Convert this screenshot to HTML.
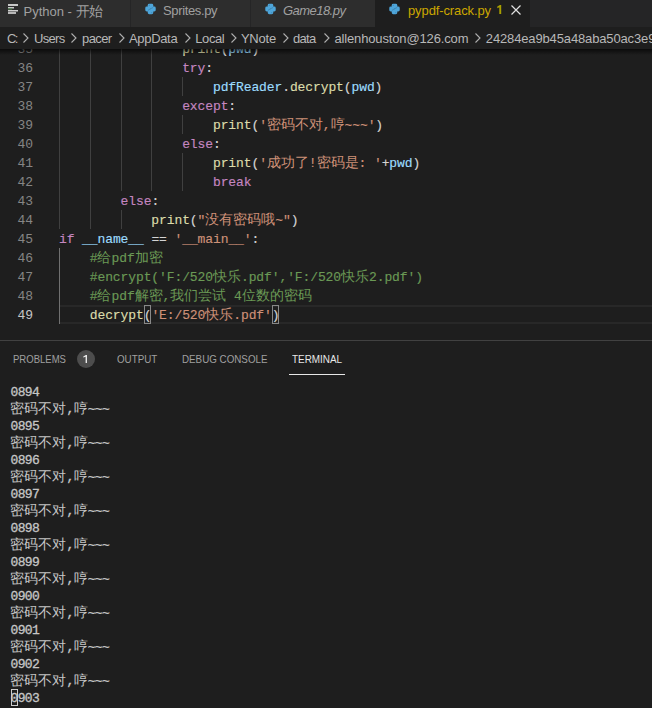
<!DOCTYPE html>
<html><head><meta charset="utf-8"><style>
html,body{margin:0;padding:0;}
body{width:652px;height:708px;overflow:hidden;background:#1e1e1e;position:relative;font-family:"Liberation Sans",sans-serif;}
.abs{position:absolute;}
#tabs{position:absolute;left:0;top:0;width:652px;height:27px;background:#252526;}
.tab{position:absolute;top:0;height:27px;background:#2d2d2d;}
.tab .lbl{position:absolute;top:3px;font-size:13px;line-height:16px;color:#a0a0a0;white-space:nowrap;}
.tab svg{position:absolute;top:3px;}
#crumbs{position:absolute;left:0;top:27px;width:652px;height:22px;background:#1e1e1e;}
.cr{position:absolute;top:4px;font-size:13px;line-height:16px;color:#b8b8b8;white-space:nowrap;}
.chev{position:absolute;top:5px;}
#editor{position:absolute;left:0;top:49px;width:652px;height:291px;overflow:hidden;background:#1e1e1e;}
#shadow{position:absolute;left:0;top:49px;width:652px;height:6px;background:linear-gradient(#000000a0,#00000000);}
.ln{position:absolute;left:0;width:33px;text-align:right;height:19px;font-family:"Liberation Mono",monospace;font-size:13px;line-height:19px;letter-spacing:-0.104px;}
.cl{position:absolute;height:19px;white-space:pre;-webkit-text-stroke:0.15px currentColor;font-family:"Liberation Mono",monospace;font-size:13px;line-height:19px;letter-spacing:-0.104px;}
.cl .cj{font-size:14px;letter-spacing:0;-webkit-text-stroke:0;}
.g{position:absolute;width:1px;height:19px;}
.cur{position:absolute;left:60px;width:592px;height:15px;border-top:2px solid #282828;border-bottom:2px solid #282828;}
.bm{position:absolute;width:5px;height:17px;border:1px solid #888;}
#panel{position:absolute;left:0;top:340px;width:652px;height:368px;background:#1e1e1e;border-top:1px solid #414141;}
.pt{position:absolute;top:11px;transform-origin:0 0;font-size:11px;line-height:14px;color:#a0a0a0;white-space:nowrap;}
.badge{position:absolute;left:77px;top:9px;width:18px;height:18px;border-radius:9px;background:#4d4d4d;color:#fff;font-size:11px;line-height:18px;text-align:center;}
.tl{position:absolute;left:10.5px;height:17px;white-space:pre;font-family:"Liberation Mono",monospace;font-size:13px;line-height:17px;letter-spacing:-0.651px;-webkit-text-stroke:0.3px currentColor;}
.tl .cj{font-size:14px;letter-spacing:0.1px;-webkit-text-stroke:0;}
.tc{position:absolute;left:11px;width:5px;height:15px;border:1px solid #cccccc;}
</style></head><body>
<div id="tabs">
 <div class="tab" style="left:0;width:130px"><svg style="left:8px;top:4px" width="12" height="12" viewBox="0 0 12 12"><rect x="0" y="0" width="10" height="2" fill="#c8c8c8"/><rect x="0" y="3" width="6" height="1.5" fill="#c8c8c8"/><rect x="0" y="4.3" width="4" height="1.2" fill="#5b8a5b"/><rect x="0" y="6" width="10" height="1.5" fill="#d0d0d0"/><rect x="0" y="8" width="8" height="2" fill="#b8b8b8"/></svg><span class="lbl" style="left:23.5px">Python - <span style="font-size:14px;position:relative;top:-0.5px;letter-spacing:-0.4px">开始</span></span></div>
 <div class="tab" style="left:131px;width:119px"><svg style="left:14px;top:3px" width="11" height="12" viewBox="0 0 12 12"><g fill="#4ea5d9"><rect x="3" y="0.3" width="6" height="5.4" rx="1.6"/><rect x="0.3" y="3.3" width="5.7" height="5.4" rx="1.6"/><rect x="3" y="6.3" width="6" height="5.4" rx="1.6"/><rect x="6" y="3.3" width="5.7" height="5.4" rx="1.6"/></g><path d="M3.2 7.6 L5.6 5.9 L8.8 4.4" stroke="#2f6f99" stroke-width="0.6" fill="none"/><circle cx="4.6" cy="1.8" r="0.5" fill="#2d5f80"/><circle cx="7.4" cy="10.2" r="0.5" fill="#2d5f80"/></svg><span class="lbl" style="left:32px;letter-spacing:-0.36px">Sprites.py</span></div>
 <div class="tab" style="left:251px;width:124px"><svg style="left:14px;top:3px" width="11" height="12" viewBox="0 0 12 12"><g fill="#4ea5d9"><rect x="3" y="0.3" width="6" height="5.4" rx="1.6"/><rect x="0.3" y="3.3" width="5.7" height="5.4" rx="1.6"/><rect x="3" y="6.3" width="6" height="5.4" rx="1.6"/><rect x="6" y="3.3" width="5.7" height="5.4" rx="1.6"/></g><path d="M3.2 7.6 L5.6 5.9 L8.8 4.4" stroke="#2f6f99" stroke-width="0.6" fill="none"/><circle cx="4.6" cy="1.8" r="0.5" fill="#2d5f80"/><circle cx="7.4" cy="10.2" r="0.5" fill="#2d5f80"/></svg><span class="lbl" style="left:32px;font-style:italic;letter-spacing:-0.54px">Game18.py</span></div>
 <div class="tab" style="left:375px;width:155px;background:#1e1e1e"><svg style="left:14px;top:3px" width="11" height="12" viewBox="0 0 12 12"><g fill="#4ea5d9"><rect x="3" y="0.3" width="6" height="5.4" rx="1.6"/><rect x="0.3" y="3.3" width="5.7" height="5.4" rx="1.6"/><rect x="3" y="6.3" width="6" height="5.4" rx="1.6"/><rect x="6" y="3.3" width="5.7" height="5.4" rx="1.6"/></g><path d="M3.2 7.6 L5.6 5.9 L8.8 4.4" stroke="#2f6f99" stroke-width="0.6" fill="none"/><circle cx="4.6" cy="1.8" r="0.5" fill="#2d5f80"/><circle cx="7.4" cy="10.2" r="0.5" fill="#2d5f80"/></svg><span class="lbl" style="left:33px;color:#cca700;letter-spacing:-0.11px">pypdf-crack.py</span><svg style="left:121px;top:4px" width="7" height="11" viewBox="0 0 7 11"><path d="M1.3 2.4 L3.9 1 L5.2 1 L5.2 10 L3.3 10 L3.3 3.3 L1.3 4.3 Z" fill="#a89f00"/></svg>
 <svg style="left:136px;top:5px" width="10" height="10" viewBox="0 0 10 10"><path d="M0.5 0.5 L9.5 9.5 M9.5 0.5 L0.5 9.5" stroke="#e0e0e0" stroke-width="1.2"/></svg></div>
</div>
<div id="crumbs">
<span class="cr" style="left:7.0px;letter-spacing:-1.6px">C:</span>
<span class="cr" style="left:34.0px;letter-spacing:-0.7px">Users</span>
<span class="cr" style="left:82.0px;letter-spacing:-0.6px">pacer</span>
<span class="cr" style="left:129.0px;letter-spacing:-0.33px">AppData</span>
<span class="cr" style="left:195.3px;letter-spacing:-0.42px">Local</span>
<span class="cr" style="left:240.9px;letter-spacing:-0.22px">YNote</span>
<span class="cr" style="left:292.9px;letter-spacing:-0.63px">data</span>
<span class="cr" style="left:334.4px;letter-spacing:-0.14px">allenhouston@126.com</span>
<span class="cr" style="left:485.8px;letter-spacing:-0.14px">24284ea9b45a48aba50ac3e9fe2a4e7f</span>
<svg class="chev" style="left:22.0px" width="8" height="12" viewBox="0 0 8 12"><path d="M1.5 1.5 L6 6 L1.5 10.5" stroke="#b0b0b0" stroke-width="1.1" fill="none"/></svg>
<svg class="chev" style="left:70.3px" width="8" height="12" viewBox="0 0 8 12"><path d="M1.5 1.5 L6 6 L1.5 10.5" stroke="#b0b0b0" stroke-width="1.1" fill="none"/></svg>
<svg class="chev" style="left:118.3px" width="8" height="12" viewBox="0 0 8 12"><path d="M1.5 1.5 L6 6 L1.5 10.5" stroke="#b0b0b0" stroke-width="1.1" fill="none"/></svg>
<svg class="chev" style="left:184.0px" width="8" height="12" viewBox="0 0 8 12"><path d="M1.5 1.5 L6 6 L1.5 10.5" stroke="#b0b0b0" stroke-width="1.1" fill="none"/></svg>
<svg class="chev" style="left:230.0px" width="8" height="12" viewBox="0 0 8 12"><path d="M1.5 1.5 L6 6 L1.5 10.5" stroke="#b0b0b0" stroke-width="1.1" fill="none"/></svg>
<svg class="chev" style="left:281.6px" width="8" height="12" viewBox="0 0 8 12"><path d="M1.5 1.5 L6 6 L1.5 10.5" stroke="#b0b0b0" stroke-width="1.1" fill="none"/></svg>
<svg class="chev" style="left:323.3px" width="8" height="12" viewBox="0 0 8 12"><path d="M1.5 1.5 L6 6 L1.5 10.5" stroke="#b0b0b0" stroke-width="1.1" fill="none"/></svg>
<svg class="chev" style="left:474.0px" width="8" height="12" viewBox="0 0 8 12"><path d="M1.5 1.5 L6 6 L1.5 10.5" stroke="#b0b0b0" stroke-width="1.1" fill="none"/></svg>
</div>
<div id="editor">
<div class="ln" style="top:-9px;color:#858585">35</div>
<div class="ln" style="top:10px;color:#858585">36</div>
<div class="ln" style="top:29px;color:#858585">37</div>
<div class="ln" style="top:48px;color:#858585">38</div>
<div class="ln" style="top:67px;color:#858585">39</div>
<div class="ln" style="top:86px;color:#858585">40</div>
<div class="ln" style="top:105px;color:#858585">41</div>
<div class="ln" style="top:124px;color:#858585">42</div>
<div class="ln" style="top:143px;color:#858585">43</div>
<div class="ln" style="top:162px;color:#858585">44</div>
<div class="ln" style="top:181px;color:#858585">45</div>
<div class="ln" style="top:200px;color:#858585">46</div>
<div class="ln" style="top:219px;color:#858585">47</div>
<div class="ln" style="top:238px;color:#858585">48</div>
<div class="ln" style="top:257px;color:#c6c6c6">49</div>
<div class="cur" style="top:256px"></div>
<div class="g" style="left:59px;top:-10px;background:#404040"></div>
<div class="g" style="left:90px;top:-10px;background:#404040"></div>
<div class="g" style="left:121px;top:-10px;background:#404040"></div>
<div class="g" style="left:151px;top:-10px;background:#404040"></div>
<div class="g" style="left:59px;top:9px;background:#404040"></div>
<div class="g" style="left:90px;top:9px;background:#404040"></div>
<div class="g" style="left:121px;top:9px;background:#404040"></div>
<div class="g" style="left:151px;top:9px;background:#404040"></div>
<div class="g" style="left:59px;top:28px;background:#404040"></div>
<div class="g" style="left:90px;top:28px;background:#404040"></div>
<div class="g" style="left:121px;top:28px;background:#404040"></div>
<div class="g" style="left:151px;top:28px;background:#404040"></div>
<div class="g" style="left:182px;top:28px;background:#404040"></div>
<div class="g" style="left:59px;top:47px;background:#404040"></div>
<div class="g" style="left:90px;top:47px;background:#404040"></div>
<div class="g" style="left:121px;top:47px;background:#404040"></div>
<div class="g" style="left:151px;top:47px;background:#404040"></div>
<div class="g" style="left:59px;top:66px;background:#404040"></div>
<div class="g" style="left:90px;top:66px;background:#404040"></div>
<div class="g" style="left:121px;top:66px;background:#404040"></div>
<div class="g" style="left:151px;top:66px;background:#404040"></div>
<div class="g" style="left:182px;top:66px;background:#404040"></div>
<div class="g" style="left:59px;top:85px;background:#404040"></div>
<div class="g" style="left:90px;top:85px;background:#404040"></div>
<div class="g" style="left:121px;top:85px;background:#404040"></div>
<div class="g" style="left:151px;top:85px;background:#404040"></div>
<div class="g" style="left:59px;top:104px;background:#404040"></div>
<div class="g" style="left:90px;top:104px;background:#404040"></div>
<div class="g" style="left:121px;top:104px;background:#404040"></div>
<div class="g" style="left:151px;top:104px;background:#404040"></div>
<div class="g" style="left:182px;top:104px;background:#404040"></div>
<div class="g" style="left:59px;top:123px;background:#404040"></div>
<div class="g" style="left:90px;top:123px;background:#404040"></div>
<div class="g" style="left:121px;top:123px;background:#404040"></div>
<div class="g" style="left:151px;top:123px;background:#404040"></div>
<div class="g" style="left:182px;top:123px;background:#404040"></div>
<div class="g" style="left:59px;top:142px;background:#404040"></div>
<div class="g" style="left:90px;top:142px;background:#404040"></div>
<div class="g" style="left:59px;top:161px;background:#404040"></div>
<div class="g" style="left:90px;top:161px;background:#404040"></div>
<div class="g" style="left:121px;top:161px;background:#404040"></div>
<div class="g" style="left:59px;top:199px;background:#707070"></div>
<div class="g" style="left:59px;top:218px;background:#707070"></div>
<div class="g" style="left:59px;top:237px;background:#707070"></div>
<div class="g" style="left:59px;top:256px;background:#707070"></div>
<div class="bm" style="left:144px;top:256px"></div>
<div class="bm" style="left:272px;top:256px"></div>
<div class="cl" style="top:-9px;left:182.16px"><span style="color:#dcdcaa">print</span><span style="color:#d4d4d4">(</span><span style="color:#9cdcfe">pwd</span><span style="color:#d4d4d4">)</span></div>
<div class="cl" style="top:10px;left:182.16px"><span style="color:#c586c0">try</span><span style="color:#d4d4d4">:</span></div>
<div class="cl" style="top:29px;left:212.95px"><span style="color:#9cdcfe">pdfReader</span><span style="color:#d4d4d4">.</span><span style="color:#dcdcaa">decrypt</span><span style="color:#d4d4d4">(</span><span style="color:#9cdcfe">pwd</span><span style="color:#d4d4d4">)</span></div>
<div class="cl" style="top:48px;left:182.16px"><span style="color:#c586c0">except</span><span style="color:#d4d4d4">:</span></div>
<div class="cl" style="top:67px;left:212.95px"><span style="color:#dcdcaa">print</span><span style="color:#d4d4d4">(</span><span style="color:#ce9178">&#x27;</span><span class="cj" style="color:#ce9178">密码不对</span><span style="color:#ce9178">,</span><span class="cj" style="color:#ce9178">哼</span><span style="color:#ce9178">~~~&#x27;</span><span style="color:#d4d4d4">)</span></div>
<div class="cl" style="top:86px;left:182.16px"><span style="color:#c586c0">else</span><span style="color:#d4d4d4">:</span></div>
<div class="cl" style="top:105px;left:212.95px"><span style="color:#dcdcaa">print</span><span style="color:#d4d4d4">(</span><span style="color:#ce9178">&#x27;</span><span class="cj" style="color:#ce9178">成功了</span><span style="color:#ce9178">!</span><span class="cj" style="color:#ce9178">密码是</span><span style="color:#ce9178">:&#160;&#x27;</span><span style="color:#d4d4d4">+</span><span style="color:#9cdcfe">pwd</span><span style="color:#d4d4d4">)</span></div>
<div class="cl" style="top:124px;left:212.95px"><span style="color:#c586c0">break</span></div>
<div class="cl" style="top:143px;left:120.58px"><span style="color:#c586c0">else</span><span style="color:#d4d4d4">:</span></div>
<div class="cl" style="top:162px;left:151.37px"><span style="color:#dcdcaa">print</span><span style="color:#d4d4d4">(</span><span style="color:#ce9178">&quot;</span><span class="cj" style="color:#ce9178">没有密码哦</span><span style="color:#ce9178">~&quot;</span><span style="color:#d4d4d4">)</span></div>
<div class="cl" style="top:181px;left:59.00px"><span style="color:#c586c0">if</span><span style="color:#d4d4d4">&#160;</span><span style="color:#9cdcfe">__name__</span><span style="color:#d4d4d4">&#160;==&#160;</span><span style="color:#ce9178">&#x27;__main__&#x27;</span><span style="color:#d4d4d4">:</span></div>
<div class="cl" style="top:200px;left:89.79px"><span style="color:#6a9955">#</span><span class="cj" style="color:#6a9955">给</span><span style="color:#6a9955">pdf</span><span class="cj" style="color:#6a9955">加密</span></div>
<div class="cl" style="top:219px;left:89.79px"><span style="color:#6a9955">#encrypt(&#x27;F:/520</span><span class="cj" style="color:#6a9955">快乐</span><span style="color:#6a9955">.pdf&#x27;,&#x27;F:/520</span><span class="cj" style="color:#6a9955">快乐</span><span style="color:#6a9955">2.pdf&#x27;)</span></div>
<div class="cl" style="top:238px;left:89.79px"><span style="color:#6a9955">#</span><span class="cj" style="color:#6a9955">给</span><span style="color:#6a9955">pdf</span><span class="cj" style="color:#6a9955">解密</span><span style="color:#6a9955">,</span><span class="cj" style="color:#6a9955">我们尝试</span><span style="color:#6a9955">&#160;4</span><span class="cj" style="color:#6a9955">位数的密码</span></div>
<div class="cl" style="top:257px;left:89.79px"><span style="color:#dcdcaa">decrypt</span><span style="color:#d4d4d4">(</span><span style="color:#ce9178">&#x27;E:/520</span><span class="cj" style="color:#ce9178">快乐</span><span style="color:#ce9178">.pdf&#x27;</span><span style="color:#d4d4d4">)</span></div>
</div>
<div id="shadow"></div>
<div id="panel">
 <span class="pt" style="left:13px;transform:scaleX(0.866)">PROBLEMS</span>
 <div class="badge"><svg style="position:absolute;left:0;top:0" width="18" height="18" viewBox="0 0 18 18"><path d="M6.3 6.4 L8.8 4.9 L10 4.9 L10 13 L8.6 13 L8.6 6.7 L6.3 7.5 Z" fill="#e8e8e8"/></svg></div>
 <span class="pt" style="left:117px;transform:scaleX(0.89)">OUTPUT</span>
 <span class="pt" style="left:182px;transform:scaleX(0.891)">DEBUG CONSOLE</span>
 <span class="pt" style="left:292px;color:#e7e7e7;transform:scaleX(0.90)">TERMINAL</span>
 <div class="abs" style="left:289px;top:33px;width:56px;height:1px;background:#e7e7e7"></div>
<div class="tl" style="top:43px;left:10.5px"><span style="color:#c6c6c6">0894</span></div>
<div class="tl" style="top:60px;left:10px"><span class="cj" style="color:#c6c6c6">密码不对</span><span style="color:#c6c6c6">,</span><span class="cj" style="color:#c6c6c6">哼</span><span style="color:#c6c6c6">~~~</span></div>
<div class="tl" style="top:77px;left:10.5px"><span style="color:#c6c6c6">0895</span></div>
<div class="tl" style="top:94px;left:10px"><span class="cj" style="color:#c6c6c6">密码不对</span><span style="color:#c6c6c6">,</span><span class="cj" style="color:#c6c6c6">哼</span><span style="color:#c6c6c6">~~~</span></div>
<div class="tl" style="top:111px;left:10.5px"><span style="color:#c6c6c6">0896</span></div>
<div class="tl" style="top:128px;left:10px"><span class="cj" style="color:#c6c6c6">密码不对</span><span style="color:#c6c6c6">,</span><span class="cj" style="color:#c6c6c6">哼</span><span style="color:#c6c6c6">~~~</span></div>
<div class="tl" style="top:145px;left:10.5px"><span style="color:#c6c6c6">0897</span></div>
<div class="tl" style="top:162px;left:10px"><span class="cj" style="color:#c6c6c6">密码不对</span><span style="color:#c6c6c6">,</span><span class="cj" style="color:#c6c6c6">哼</span><span style="color:#c6c6c6">~~~</span></div>
<div class="tl" style="top:179px;left:10.5px"><span style="color:#c6c6c6">0898</span></div>
<div class="tl" style="top:196px;left:10px"><span class="cj" style="color:#c6c6c6">密码不对</span><span style="color:#c6c6c6">,</span><span class="cj" style="color:#c6c6c6">哼</span><span style="color:#c6c6c6">~~~</span></div>
<div class="tl" style="top:213px;left:10.5px"><span style="color:#c6c6c6">0899</span></div>
<div class="tl" style="top:230px;left:10px"><span class="cj" style="color:#c6c6c6">密码不对</span><span style="color:#c6c6c6">,</span><span class="cj" style="color:#c6c6c6">哼</span><span style="color:#c6c6c6">~~~</span></div>
<div class="tl" style="top:247px;left:10.5px"><span style="color:#c6c6c6">0900</span></div>
<div class="tl" style="top:264px;left:10px"><span class="cj" style="color:#c6c6c6">密码不对</span><span style="color:#c6c6c6">,</span><span class="cj" style="color:#c6c6c6">哼</span><span style="color:#c6c6c6">~~~</span></div>
<div class="tl" style="top:281px;left:10.5px"><span style="color:#c6c6c6">0901</span></div>
<div class="tl" style="top:298px;left:10px"><span class="cj" style="color:#c6c6c6">密码不对</span><span style="color:#c6c6c6">,</span><span class="cj" style="color:#c6c6c6">哼</span><span style="color:#c6c6c6">~~~</span></div>
<div class="tl" style="top:315px;left:10.5px"><span style="color:#c6c6c6">0902</span></div>
<div class="tl" style="top:332px;left:10px"><span class="cj" style="color:#c6c6c6">密码不对</span><span style="color:#c6c6c6">,</span><span class="cj" style="color:#c6c6c6">哼</span><span style="color:#c6c6c6">~~~</span></div>
<div class="tl" style="top:349px;left:10.5px"><span style="color:#c6c6c6">0903</span></div>
<div class="tc" style="top:348px"></div>
</div>
</body></html>
